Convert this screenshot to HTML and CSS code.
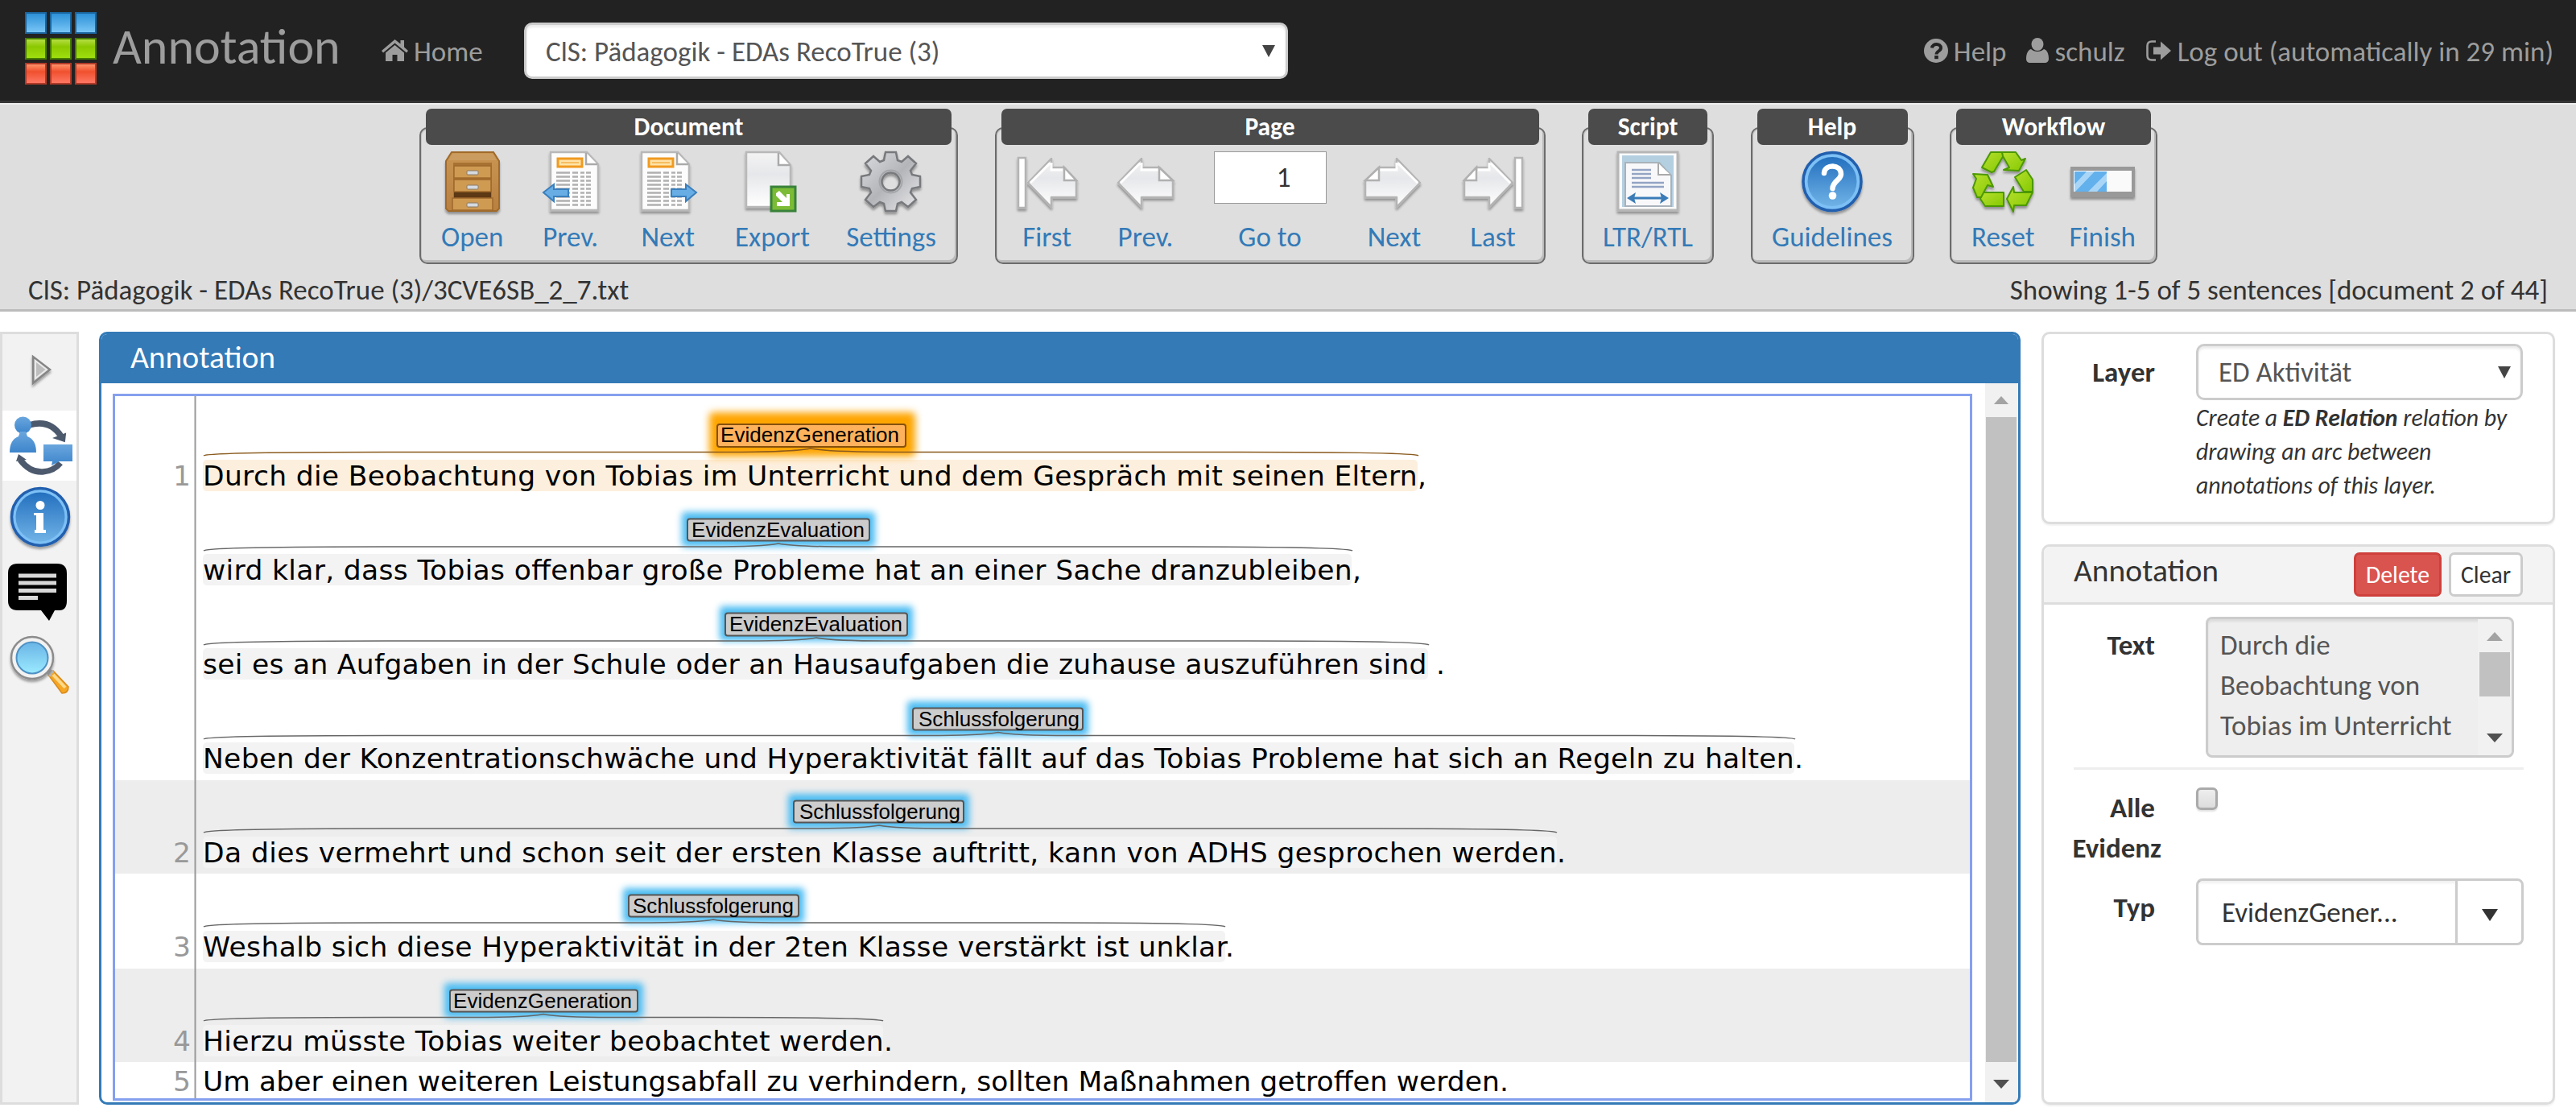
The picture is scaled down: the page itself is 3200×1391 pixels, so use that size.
FILE: index.html
```html
<!DOCTYPE html>
<html lang="de">
<head>
<meta charset="utf-8">
<title>Annotation</title>
<link rel="stylesheet" href="styles.css">
</head>
<body>
<svg class="defs" width="0" height="0">
  <defs>
    <linearGradient id="blueTile" x1="0" y1="0" x2="0" y2="1"><stop offset="0" stop-color="#2a8fd6"/><stop offset="1" stop-color="#7cc8f8"/></linearGradient>
    <linearGradient id="greenTile" x1="0" y1="0" x2="0" y2="1"><stop offset="0" stop-color="#b9e04a"/><stop offset=".4" stop-color="#8cc800"/><stop offset="1" stop-color="#a0e010"/></linearGradient>
    <linearGradient id="redTile" x1="0" y1="0" x2="0" y2="1"><stop offset="0" stop-color="#ff9a70"/><stop offset=".4" stop-color="#f0502e"/><stop offset="1" stop-color="#ff7a66"/></linearGradient>
    <linearGradient id="wood" x1="0" y1="0" x2="0" y2="1"><stop offset="0" stop-color="#c99552"/><stop offset="1" stop-color="#b98040"/></linearGradient>
    <linearGradient id="steel" x1="0" y1="0" x2="1" y2="1"><stop offset="0" stop-color="#dcdde0"/><stop offset=".5" stop-color="#b4b5b9"/><stop offset="1" stop-color="#ececee"/></linearGradient>
    <linearGradient id="paper" x1="0" y1="0" x2="0" y2="1"><stop offset="0" stop-color="#f4f4f4"/><stop offset=".4" stop-color="#e6e7ea"/><stop offset="1" stop-color="#ffffff"/></linearGradient>
    <linearGradient id="ball" x1="0" y1="0" x2="0" y2="1"><stop offset="0" stop-color="#2470bf"/><stop offset="1" stop-color="#6fb2e6"/></linearGradient>
    <linearGradient id="leaf" x1="0" y1="0" x2="1" y2="1"><stop offset="0" stop-color="#b8e030"/><stop offset="1" stop-color="#84c800"/></linearGradient>
    <linearGradient id="glass" x1="0" y1="0" x2="0" y2="1"><stop offset="0" stop-color="#69b4e6"/><stop offset="1" stop-color="#9beaff"/></linearGradient>
    <linearGradient id="person" x1="0" y1="0" x2="0" y2="1"><stop offset="0" stop-color="#6aa6de"/><stop offset="1" stop-color="#3d85cb"/></linearGradient>
    <filter id="drop" x="-20%" y="-20%" width="140%" height="150%"><feDropShadow dx="0" dy="3" stdDeviation="1.5" flood-color="#000" flood-opacity=".35"/></filter>
    <g id="pageBack" filter="url(#drop)">
      <path d="M33 9v11h22l17 17v20H33v12L4 39Z" fill="url(#paper)" stroke="#b4b4b4" stroke-width="2.5" stroke-linejoin="round"/>
      <path d="M33 14v9h21M7 39L31 15" fill="none" stroke="#fff" stroke-width="3"/>
      <path d="M55 20v16h17Z" fill="#fff" stroke="#b0b0b0" stroke-width="2.5"/>
    </g>
    <g id="pageEnd" filter="url(#drop)">
      <rect x="2" y="8" width="9" height="62" fill="#fff" stroke="#b4b4b4" stroke-width="2.5"/>
      <path d="M43 9v11h16l15 16v21H43v12L14 39Z" fill="url(#paper)" stroke="#b4b4b4" stroke-width="2.5" stroke-linejoin="round"/>
      <path d="M43 14v9h14M17 39L41 15" fill="none" stroke="#fff" stroke-width="3"/>
      <path d="M59 20v16h15Z" fill="#fff" stroke="#b0b0b0" stroke-width="2.5"/>
    </g>
    <g id="textPage">
      <path filter="url(#drop)" d="M5 1H50L64 16V73H5Z" fill="#fcfcfc" stroke="#b8b8b8" stroke-width="2.5"/>
      <path d="M49 2v14h14" fill="#fff" stroke="#aaa" stroke-width="2.5"/>
      <rect x="14" y="9" width="30" height="10" fill="#ffe3a8" stroke="#f09a20" stroke-width="3"/>
      <path d="M18 14h22" stroke="#f6bd60" stroke-width="2"/>
      <path d="M12 26.500h43M12 31.500h43M12 36.500h43M12 41.500h43M12 46.500h43M12 51.500h43M12 56.500h43M12 61.500h43M12 66.500h43" stroke="#b0b0b0" stroke-width="2.600" stroke-dasharray="17 3 7 3 5 2"/>
    </g>
  </defs>
</svg>

<header class="navbar">
  <svg class="logo" viewBox="0 0 92 92">
    <g stroke="#1a659f" stroke-width="2" fill="url(#blueTile)"><rect x="2" y="1" width="25" height="25"/><rect x="33" y="1" width="25" height="25"/><rect x="64" y="1" width="25" height="25"/></g>
    <g stroke="#467b00" stroke-width="2" fill="url(#greenTile)"><rect x="2" y="33" width="25" height="25"/><rect x="33" y="33" width="25" height="25"/><rect x="64" y="33" width="25" height="25"/></g>
    <g stroke="#b03a28" stroke-width="2" fill="url(#redTile)"><rect x="2" y="64" width="25" height="25"/><rect x="33" y="64" width="25" height="25"/><rect x="64" y="64" width="25" height="25"/></g>
  </svg>
  <h1 class="brand">Annotation</h1>
  <a class="nav-link home"><svg class="ico-home" viewBox="0 0 33 28"><path d="M16.500 1L0 15l2 2.500L16.500 5.500 31 17.500l2-2.500-5-4.500V2h-4.500v4.500Z"/><path d="M16.500 8L5 17.500V28h8.500v-8h6v8H28V17.500Z"/></svg>Home</a>
  <div class="doc-select"><span>ClS: Pädagogik - EDAs RecoTrue (3)</span><svg class="caret" viewBox="0 0 16 15"><path d="M0 0h16L8 15Z"/></svg></div>
  <nav class="nav-right">
    <a class="nav-link"><svg class="ico-help" viewBox="0 0 30 30"><circle cx="15" cy="15" r="15"/><path d="M10 11.500c.5-6 11-6 11 0 0 4-5.500 4-5.500 8" fill="none" stroke="#222" stroke-width="4"/><rect x="13.200" y="21" width="4.600" height="4.200" fill="#222"/></svg>Help</a>
    <a class="nav-link user"><svg class="ico-user" viewBox="0 0 28 31"><ellipse cx="14" cy="8" rx="7.500" ry="8"/><path d="M6 14c4 4 12 4 16 0 4 1 6 6 6 12 0 3-2 5-5 5H5c-3 0-5-2-5-5 0-6 2-11 6-12Z"/></svg>schulz</a>
    <a class="nav-link logout"><svg class="ico-out" viewBox="0 0 31 26"><path d="M12 1.500H7Q1.500 1.500 1.500 7v12q0 5.500 5.500 5.500h5" fill="none" stroke="#9d9d9d" stroke-width="2.600"/><path d="M9 8.500h9V1.500L31 13 18 24.500v-7H9Z"/></svg>Log out (automatically in 29 min)</a>
  </nav>
</header>

<section class="toolbar">
  <div class="groups">
    <div class="group g-document">
      <h2>Document</h2>
      <div class="items">
        <a class="item"><svg class="ico" viewBox="0 0 76 76"><path filter="url(#drop)" d="M12 1H64L71 12V71L68 74H8L5 71V12Z" fill="url(#wood)" stroke="#a06a2c" stroke-width="2"/><path d="M13 3H63L68 11H8Z" fill="#cb9c5f"/><rect x="14" y="14" width="48" height="60" fill="#a87233"/><path d="M15 50h46v8H15Z" fill="#5c3814"/><g fill="#cf9a52" stroke="#a06a2c" stroke-width="1.500"><rect x="15" y="18" width="46" height="15"/><rect x="15" y="35" width="46" height="15"/><path d="M13 58h50v15H13Z"/></g><g fill="#d5dae0" stroke="#8a7a66"><rect x="31" y="24" width="14" height="5" rx="1"/><rect x="31" y="42" width="14" height="5" rx="1"/><rect x="31" y="64" width="14" height="5" rx="1"/></g></svg>Open</a>
        <a class="item"><svg class="ico" viewBox="0 0 76 76"><use href="#textPage" x="8"/><path d="M4 51L17 41v6h18v9H17v6Z" fill="#68aee4" stroke="#3a7fbd" stroke-width="2"/></svg>Prev.</a>
        <a class="item"><svg class="ico" viewBox="0 0 76 76"><use href="#textPage"/><path d="M73 51L60 41v6H42v9H60v6Z" fill="#68aee4" stroke="#3a7fbd" stroke-width="2"/></svg>Next</a>
        <a class="item"><svg class="ico" viewBox="0 0 76 76"><path filter="url(#drop)" d="M6 1H47L61 17V69H6Z" fill="url(#paper)" stroke="#b8b8b8" stroke-width="2.500"/><path d="M46 2v15h14" fill="#fff" stroke="#aaa" stroke-width="2.500"/><rect x="37" y="44" width="30" height="30" fill="#7bbb35" stroke="#38823a" stroke-width="3"/><path d="M43 52l4-3 9 9v-5h4v15H44v-5h7l-8-8Z" fill="#fff"/></svg>Export</a>
        <a class="item"><svg class="ico" viewBox="0 0 76 76"><g filter="url(#drop)" stroke="#77797c" stroke-width="2.500"><path fill="url(#steel)" fill-rule="evenodd" d="M31 1h13l2 10 5 2 8-7 10 9-7 9 2 5 10 2v13l-10 2-2 5 7 9-10 9-8-6-5 2-2 9H31l-2-9-5-2-8 6-10-9 7-9-2-5-10-2V31l10-2 2-5-7-9 10-9 8 7 5-2ZM37.500 26.500a11 11 0 1 0 .01 0Z"/></g><circle cx="37.500" cy="37.500" r="14" fill="none" stroke="#a4a5a8" stroke-width="2"/></svg>Settings</a>
      </div>
    </div>
    <div class="group g-page">
      <h2>Page</h2>
      <div class="items">
        <a class="item"><svg class="ico" viewBox="0 0 76 76"><use href="#pageEnd"/></svg>First</a>
        <a class="item"><svg class="ico" viewBox="0 0 76 76"><use href="#pageBack"/></svg>Prev.</a>
        <a class="item"><span class="page-input">1</span>Go to</a>
        <a class="item"><svg class="ico" viewBox="0 0 76 76"><use href="#pageBack" transform="translate(74 0) scale(-1 1)"/></svg>Next</a>
        <a class="item"><svg class="ico" viewBox="0 0 76 76"><use href="#pageEnd" transform="translate(76 0) scale(-1 1)"/></svg>Last</a>
      </div>
    </div>
    <div class="group g-script">
      <h2>Script</h2>
      <div class="items">
        <a class="item"><svg class="ico" viewBox="0 0 76 76"><rect filter="url(#drop)" x="1" y="1" width="74" height="72" fill="#fafafa" stroke="#b6b6b6" stroke-width="3"/><rect x="6" y="5" width="64" height="64" fill="#b4cfe0"/><path d="M10 68V14H52L67 30V68Z" fill="#f8f8fa" stroke="#a9b2ba" stroke-width="2"/><path d="M51 15v14h15" fill="#fff" stroke="#aaa" stroke-width="2"/><path d="M18 23h24M18 28h24M18 33h24M18 39h40M18 44h40" stroke="#93a4c4" stroke-width="2.500"/><path d="M17 58h42" stroke="#3b7cb8" stroke-width="3"/><path d="M12 58l11-7-2 7 2 7ZM64 58l-11-7 2 7-2 7Z" fill="#3b7cb8"/></svg>LTR/RTL</a>
      </div>
    </div>
    <div class="group g-help">
      <h2>Help</h2>
      <div class="items">
        <a class="item"><svg class="ico" viewBox="0 0 76 76"><circle cx="38" cy="37.500" r="36" fill="#7dc0f5" stroke="#205fae" stroke-width="3.500" filter="url(#drop)"/><circle cx="38" cy="37.500" r="30.500" fill="url(#ball)"/><path d="M28 27c1-12 21-11 21 1 0 8-10 8-10.500 18" fill="none" stroke="#fff" stroke-width="6.500" stroke-linecap="round"/><circle cx="38.500" cy="55" r="4.800" fill="#fff"/></svg>Guidelines</a>
      </div>
    </div>
    <div class="group g-workflow">
      <h2>Workflow</h2>
      <div class="items">
        <a class="item"><svg class="ico" viewBox="0 0 76 76"><g filter="url(#drop)" fill="url(#leaf)" stroke="#4c9800" stroke-width="2" stroke-linejoin="round"><path d="M12 20L23 1H37L39 5 27 25 24 26Z"/><path d="M37 1H54L61 11 66 9 58 24 39 23 46 20 38 6Z"/><path d="M53 32L67 23 75 35V50H64Z"/><path d="M43 59L51 44 52 51H75L67 67H52L51 75Z"/><path d="M12 51H39V68H16L10 59Z"/><path d="M1 28L19 29 26 44 19 42 11 57H6L1 45 5 34Z"/></g></svg>Reset</a>
        <a class="item"><svg class="ico-bar" viewBox="0 0 80 76"><rect y="19" width="80" height="38" fill="#999" filter="url(#drop)"/><rect y="19" width="80" height="35" fill="#999"/><rect x="4" y="24" width="72" height="26" fill="#fafafa"/><rect x="5" y="25" width="40" height="25" fill="#62b0ec"/><path d="M5 41L20 25h10L6 50H5ZM22 50L45 27v10L33 50Z" fill="#a9d6f7"/></svg>Finish</a>
      </div>
    </div>
  </div>
  <div class="status"><span>ClS: Pädagogik - EDAs RecoTrue (3)/3CVE6SB_2_7.txt</span><span>Showing 1-5 of 5 sentences [document 2 of 44]</span></div>
</section>

<main class="workspace">
  <aside class="sidebar">
    <svg class="cell c1" viewBox="3 415 92 95"><path filter="url(#drop)" d="M41 443L62 459 41 476Z" fill="#bdbdbd" stroke="#858585" stroke-width="2.500"/><path d="M44 448v22L58 459Z" fill="none" stroke="#e9e9e9" stroke-width="2"/></svg>
    <svg class="cell c2" viewBox="3 510 92 87"><path d="M36 528Q62 520 76 542" fill="none" stroke="#4d5a6e" stroke-width="7.500"/><path d="M68 544l13-5-1 9Z" fill="#4d5a6e" stroke="#4d5a6e" stroke-width="2"/><path d="M25 571q12 16 28 15 14-1 22-11" fill="none" stroke="#4d5a6e" stroke-width="7.500"/><path d="M20 573l3-9 10 7Z" fill="#4d5a6e"/><g fill="url(#person)"><circle cx="28.500" cy="528" r="10.500"/><path d="M25 536h7l2 6q11 4 11 20H12q0-16 11-20Z"/><path d="M54 552h36v21H74l-10 5 1-5H54Z"/></g></svg>
    <svg class="cell c3" viewBox="3 597 92 93"><circle cx="50" cy="642" r="35.500" fill="#7dc0f5" stroke="#205fae" stroke-width="3.500" filter="url(#drop)"/><circle cx="50" cy="642" r="30.500" fill="url(#ball)"/><circle cx="50" cy="627.500" r="5.500" fill="#fff"/><path d="M42 637h12v21h3v4H43v-4h2v-18h-3Z" fill="#fff"/></svg>
    <svg class="cell c4" viewBox="3 690 92 90"><path d="M22 700H71q12 0 12 12v34q0 12-9 12h-6l-7 13-10-13H22q-12 0-12-12V712q0-12 12-12Z" fill="#000"/><path d="M23 715h47M23 724h47M23 733.500h47M23 742.500h24" stroke="#d8d8d8" stroke-width="5"/></svg>
    <svg class="cell c5" viewBox="3 780 92 95"><path d="M60 838l6-5 19 20q0 8-8 8Z" fill="#f5a623" stroke="#d98a1c" stroke-width="1.500"/><path d="M66 838l15 16" stroke="#ffd98a" stroke-width="4"/><path d="M58 836l5-5 4 3-5 7Z" fill="#b9b9b9"/><circle filter="url(#drop)" cx="40" cy="817" r="26" fill="#f2f2f2" stroke="#8c8c8c" stroke-width="2.500"/><circle cx="40" cy="817" r="19.500" fill="url(#glass)" stroke="#4e91c4" stroke-width="2"/></svg>
  </aside>

  <section class="editor">
    <h2>Annotation</h2>
    <div class="editor-body">
      <svg class="brat" viewBox="140 489 2310 878">
        <rect x="141.500" y="490.500" width="2307" height="875" fill="#fff"/>
        <g class="band"><rect x="143" y="969" width="2304" height="116"/><rect x="143" y="1203" width="2304" height="116"/></g>
        <path d="M242.500 492V1364" stroke="#999" stroke-width="2"/>
        <rect class="mark focus" x="252" y="571" width="1509" height="39" rx="5"/>
        <g class="mark">
          <rect x="252" y="688" width="1427" height="39" rx="5"/>
          <rect x="252" y="805" width="1522" height="39" rx="5"/>
          <rect x="252" y="922" width="1977" height="39" rx="5"/>
          <rect x="252" y="1039" width="1682" height="39" rx="5"/>
          <rect x="252" y="1156" width="1270" height="39" rx="5"/>
          <rect x="252" y="1273" width="845" height="39" rx="5"/>
        </g>
        <rect class="glow focus" x="881" y="512" width="256" height="55" rx="5"/>
        <g class="glow">
          <rect x="847" y="636" width="240" height="43" rx="4"/>
          <rect x="894" y="753" width="240" height="43" rx="4"/>
          <rect x="1127" y="871" width="225" height="43" rx="4"/>
          <rect x="979" y="986" width="225" height="43" rx="4"/>
          <rect x="774" y="1103" width="225" height="43" rx="4"/>
          <rect x="552" y="1221" width="247" height="43" rx="4"/>
        </g>
        <rect class="tag focus" x="891" y="527" width="234" height="28" rx="3"/>
        <g class="tag">
          <rect x="854" y="644.500" width="226" height="27" rx="3"/>
          <rect x="901" y="761.500" width="226" height="28" rx="3"/>
          <rect x="1134" y="879.500" width="211" height="27" rx="3"/>
          <rect x="986" y="994.500" width="211" height="27" rx="3"/>
          <rect x="781" y="1111.500" width="211" height="27" rx="3"/>
          <rect x="559" y="1229.500" width="233" height="27" rx="3"/>
        </g>
        <g class="tag-text">
          <text x="895" y="549" textLength="222">EvidenzGeneration</text>
          <text x="859" y="667" textLength="215">EvidenzEvaluation</text>
          <text x="906" y="784" textLength="215">EvidenzEvaluation</text>
          <text x="1141" y="902" textLength="200">Schlussfolgerung</text>
          <text x="993" y="1017" textLength="200">Schlussfolgerung</text>
          <text x="786" y="1134" textLength="200">Schlussfolgerung</text>
          <text x="563" y="1252" textLength="222">EvidenzGeneration</text>
        </g>
        <g class="curve">
          <path class="focus" d="M253 566Q258 561.500 480 561.500H900Q985 561.500 1007 557Q1030 561.500 1110 561.500H1540Q1757 561.500 1762 566"/>
          <path d="M253 684Q258 679 480 679H880Q948 679 967 675Q986 679 1055 679H1460Q1675 679 1680 684"/>
          <path d="M253 801Q258 796 480 796H925Q995 796 1014 792Q1033 796 1100 796H1550Q1770 796 1775 801"/>
          <path d="M253 918Q258 913.500 480 913.500H1150Q1220 913.500 1240 909.500Q1260 913.500 1330 913.500H2000Q2225 913.500 2230 918"/>
          <path d="M253 1034Q258 1029 480 1029H1000Q1073 1029 1092 1025Q1111 1029 1180 1029H1710Q1929 1029 1934 1034"/>
          <path d="M253 1151Q258 1146 480 1146H790Q867 1146 886 1142Q905 1146 980 1146H1300Q1517 1146 1522 1151"/>
          <path d="M253 1268Q258 1263.500 480 1263.500H590Q656 1263.500 675 1259.500Q694 1263.500 760 1263.500H880Q1092 1263.500 1097 1268"/>
        </g>
        <g class="sentence">
          <text x="252" y="603" textLength="1520">Durch die Beobachtung von Tobias im Unterricht und dem Gespräch mit seinen Eltern,</text>
          <text x="252" y="720" textLength="1439">wird klar, dass Tobias offenbar große Probleme hat an einer Sache dranzubleiben,</text>
          <text x="252" y="837" textLength="1543">sei es an Aufgaben in der Schule oder an Hausaufgaben die zuhause auszuführen sind .</text>
          <text x="252" y="954" textLength="1988">Neben der Konzentrationschwäche und Hyperaktivität fällt auf das Tobias Probleme hat sich an Regeln zu halten.</text>
          <text x="252" y="1071" textLength="1693">Da dies vermehrt und schon seit der ersten Klasse auftritt, kann von ADHS gesprochen werden.</text>
          <text x="252" y="1188" textLength="1281">Weshalb sich diese Hyperaktivität in der 2ten Klasse verstärkt ist unklar.</text>
          <text x="252" y="1305" textLength="857">Hierzu müsste Tobias weiter beobachtet werden.</text>
          <text x="252" y="1355" textLength="1622">Um aber einen weiteren Leistungsabfall zu verhindern, sollten Maßnahmen getroffen werden.</text>
        </g>
        <g class="number">
          <text x="237" y="603">1</text><text x="237" y="1071">2</text><text x="237" y="1188">3</text><text x="237" y="1305">4</text><text x="237" y="1355">5</text>
        </g>
        <rect x="141.500" y="490.500" width="2307" height="875" fill="none" stroke="#85a0ee" stroke-width="3"/>
      </svg>
      <div class="scroll"><svg class="arr up" viewBox="0 0 20 11"><path d="M0 11h20L10 0Z"/></svg><div class="thumb"></div><svg class="arr" viewBox="0 0 20 11"><path d="M0 0h20L10 11Z"/></svg></div>
    </div>
  </section>

  <aside class="details">
    <section class="card layer">
      <label>Layer</label>
      <div>
        <div class="layer-select"><span>ED Aktivität</span><svg class="caret" viewBox="0 0 16 15"><path d="M0 0h16L8 15Z"/></svg></div>
        <p class="hint">Create a <b>ED Relation</b> relation by<br>drawing an arc between<br>annotations of this layer.</p>
      </div>
    </section>
    <section class="card form">
      <header><h3>Annotation</h3><button class="btn danger">Delete</button><button class="btn">Clear</button></header>
      <div class="row text-row">
        <label>Text</label>
        <div class="textarea"><p>Durch die<br>Beobachtung von<br>Tobias im Unterricht</p><div class="mini-scroll"><svg class="arr up" viewBox="0 0 20 11"><path d="M0 11h20L10 0Z"/></svg><div class="thumb"></div><svg class="arr" viewBox="0 0 20 11"><path d="M0 0h20L10 11Z"/></svg></div></div>
      </div>
      <hr>
      <div class="row check-row"><label><span>Alle</span><span class="long">Evidenz</span></label><span class="check"></span></div>
      <div class="row type-row"><label>Typ</label><div class="combo"><span>EvidenzGener...</span><i><svg class="tri" viewBox="0 0 20 15"><path d="M0 0h20L10 15Z"/></svg></i></div></div>
    </section>
  </aside>
</main>
</body>
</html>
```
FILE: styles.css
```css
* { box-sizing: border-box; }
body { margin: 0; width: 3200px; height: 1391px; overflow: hidden; background: #fff; color: #333; font: 35px/50px Carlito, Calibri, "Open Sans", sans-serif; }
h1, h2, h3, p { margin: 0; font-weight: 400; }
svg { display: block; flex: none; }
.defs { position: absolute; }

.navbar { height: 128px; display: flex; align-items: flex-start; background: #222; border-bottom: 3px solid #363636; color: #9d9d9d; }
.logo { width: 92px; height: 92px; margin: 15px 0 0 30px; }
.brand { margin: 22px 0 0 18px; width: 283px; font-size: 62px; line-height: 72px; white-space: nowrap; }
.nav-link { display: flex; white-space: nowrap; margin-top: 39px; }
.nav-link svg { fill: #9d9d9d; }
.home { margin-left: 51px; width: 129px; }
.ico-home { width: 33px; height: 28px; margin: 9px 7px 0 0; }
.doc-select { width: 949px; height: 70px; margin: 28px 0 0 48px; padding: 8px 13px 0 24px; display: flex; justify-content: space-between; background: #fff; border: 3px solid #ccc; border-radius: 10px; box-shadow: inset 0 3px 3px rgba(0,0,0,.08); color: #555; }
.caret { width: 16px; height: 15px; margin-top: 17px; fill: #444; }
.nav-right { display: flex; margin-left: auto; padding-right: 28px; }
.ico-help { width: 30px; height: 30px; margin: 9px 7px 0 0; }
.user { margin-left: 24px; }
.ico-user { width: 28px; height: 31px; margin: 8px 8px 0 0; }
.logout { margin-left: 26px; }
.ico-out { width: 31px; height: 26px; margin: 11px 8px 0 0; }

.toolbar { height: 259px; background: #dedede; border-top: 2px solid #eee; border-bottom: 3px solid #bbb; }
.groups { display: flex; gap: 45.500px; padding: 28px 0 0 521px; }
.group { height: 170px; padding: 0 4px; border: 2px solid #6c6c6c; border-radius: 10px; box-shadow: inset -2px -3px #bbb, inset 1px 1px #c4c4c4; }
.g-document { width: 669px; }
.g-page { width: 684px; }
.g-script { width: 164px; }
.g-help { width: 203px; }
.g-workflow { width: 258px; margin-left: -1px; }
.group h2 { height: 45px; margin: -25px 2px 0; background: #4b4b4b; border-radius: 7px; color: #fff; font-size: 31.500px; font-weight: 700; line-height: 45px; text-align: center; }
.items { display: flex; justify-content: space-between; padding: 8px 21px 0; }
.g-script .items, .g-help .items { justify-content: center; padding: 8px 0 0; }
.item { min-width: 76px; display: flex; flex-direction: column; align-items: center; color: #337ab7; line-height: 50px; white-space: nowrap; }
.ico { width: 76px; height: 76px; margin-bottom: 5px; overflow: visible; }
.ico-bar { width: 80px; height: 76px; margin-bottom: 5px; overflow: visible; }
.page-input { width: 140px; height: 65px; margin-bottom: 16px; padding: 6px 43px 0 0; background: #fff; border: 1px solid #999; color: #333; text-align: right; }
.status { display: flex; justify-content: space-between; padding: 7px 35px 0; }

.workspace { display: flex; height: 960px; margin-top: 25px; }
.sidebar { width: 98px; background: #f2f2f2; border: 3px solid #ddd; }
.cell { width: 92px; }
.c1 { height: 95px; }
.c2 { height: 87px; background: #fff; }
.c3 { height: 93px; }
.c4 { height: 90px; }
.c5 { height: 95px; }
.editor { width: 2387px; margin-left: 25px; display: flex; flex-direction: column; border: 3px solid #337ab7; border-radius: 10px; overflow: hidden; }
.editor h2 { height: 61px; padding: 4px 0 0 36px; background: #337ab7; color: #fff; font-size: 39.500px; line-height: 50px; }
.editor-body { flex: 1; display: flex; padding-left: 14px; }
.brat { width: 2310px; height: 878px; margin-top: 13px; font-variant-ligatures: none; }
.band { fill: #ededed; }
.mark { fill: #f3f3f3; }
.mark.focus { fill: #fdefdd; }
.glow { fill: #4cbcf2; filter: blur(4.5px); }
.glow.focus { fill: #ffa500; filter: blur(5px); }
.tag { fill: #ccc; stroke: #555; stroke-width: 2; }
.tag.focus { fill: #ffb25c; stroke: #85510c; }
.tag-text { font: 26px "Liberation Sans", Arial, sans-serif; fill: #000; }
.curve { fill: none; stroke: #666; stroke-width: 1.5; }
.curve .focus { stroke: #8a5a1e; }
.sentence { font: 34.500px "DejaVu Sans", Verdana, sans-serif; fill: #000; }
.number { font: 34.500px "DejaVu Sans", Verdana, sans-serif; fill: #999; text-anchor: end; }
.scroll { width: 40px; margin-left: 16px; display: flex; flex-direction: column; align-items: center; background: #f1f1f1; }
.scroll .thumb { width: 38px; height: 801px; margin: 16px 0 22px; background: #c1c1c1; }
.arr { width: 20px; height: 11px; fill: #505050; }
.arr.up { fill: #a3a3a3; }
.scroll .arr.up { margin-top: 16px; height: 10px; }

.details { width: 638px; margin-left: 26px; display: flex; flex-direction: column; gap: 25px; }
.card { border: 3px solid #ddd; border-radius: 10px; box-shadow: 0 2px 2px rgba(0,0,0,.06); }
label { font-weight: 700; text-align: right; }
.layer { height: 239px; display: flex; gap: 51px; padding-top: 12px; }
.layer label { width: 138px; padding-top: 10px; }
.layer-select { width: 406px; height: 70px; padding: 7px 12px 0 25px; display: flex; justify-content: space-between; border: 3px solid #ccc; border-radius: 10px; box-shadow: inset 0 3px 3px rgba(0,0,0,.08); color: #555; }
.layer-select .caret { margin-top: 18px; }
.hint { margin-top: 1px; font-size: 29.750px; font-style: italic; line-height: 42px; white-space: nowrap; }
.form { flex: 1; }
.form header { height: 72px; display: flex; padding: 7px 37px 0 37px; background: #f3f3f3; border-bottom: 3px solid #ddd; border-radius: 8px 8px 0 0; }
.form h3 { flex: 1; margin-top: -2px; font-size: 39.500px; line-height: 50px; }
.btn { width: 92px; height: 55px; padding: 0; background: #fff; border: 3px solid #ccc; border-radius: 7px; color: #333; font: 29.750px/51px Carlito, Calibri, sans-serif; }
.danger { width: 109px; margin-right: 9px; background: #d9534f; border-color: #ce403c; color: #fff; }
.row { display: flex; }
.row label { width: 138px; }
.text-row { padding-top: 15px; }
.text-row label { padding-top: 10px; }
.textarea { width: 383px; height: 175px; margin-left: 63px; padding: 7px 0 0 15px; display: flex; justify-content: space-between; background: #eee; border: 3px solid #ccc; border-radius: 8px; box-shadow: inset 0 3px 3px rgba(0,0,0,.08); color: #555; white-space: nowrap; }
.mini-scroll { width: 42px; height: 169px; margin: -7px 0 0; display: flex; flex-direction: column; align-items: center; background: #f1f1f1; border-radius: 0 6px 6px 0; }
.mini-scroll .arr.up { margin-top: 16px; }
.mini-scroll .thumb { width: 38px; height: 55px; margin: 14px 0 46px; background: #c1c1c1; }
hr { width: 559px; height: 3px; margin: 12px 0 0 37px; border: 0; background: #eee; }
.check-row { height: 135px; }
.check-row label { padding-top: 22px; display: flex; flex-direction: column; }
.long { margin-right: -8px; }
.check { width: 27px; height: 28px; margin: 22px 0 0 51px; border: 3px solid #aaa; border-radius: 6px; background: linear-gradient(#eee, #dcdcdc); box-shadow: 0 2px 2px rgba(0,0,0,.12); }
.type-row label { padding-top: 11px; }
.combo { width: 407px; height: 83px; margin-left: 51px; display: flex; border: 3px solid #ccc; border-radius: 8px; }
.combo span { width: 319px; padding: 14px 0 0 29px; box-shadow: inset 0 3px 3px rgba(0,0,0,.06); }
.combo i { flex: 1; border-left: 3px solid #ccc; }
.tri { width: 20px; height: 15px; margin: 35px 0 0 30px; fill: #333; }
```
